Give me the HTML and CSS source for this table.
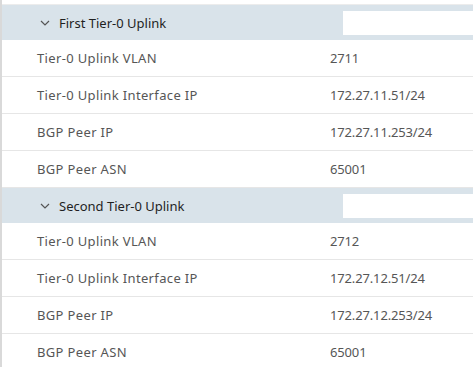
FILE: index.html
```html
<!DOCTYPE html>
<html>
<head>
<meta charset="utf-8">
<link rel="stylesheet" href="styles.css">
</head>
<body>
<div class="panel">
  <div class="group">
    <div class="group-header">
      <svg class="chev" width="10" height="6" viewBox="0 0 10 6"><path d="M1 1 L5 5 L9 1" fill="none" stroke="#555" stroke-width="1.2"/></svg>
      <span class="group-title">First Tier-0 Uplink</span>
      <div class="field"></div>
    </div>
    <div class="row"><span class="label">Tier-0 Uplink VLAN</span><span class="value">2711</span></div>
    <div class="row"><span class="label">Tier-0 Uplink Interface IP</span><span class="value">172.27.11.51/24</span></div>
    <div class="row"><span class="label">BGP Peer IP</span><span class="value">172.27.11.253/24</span></div>
    <div class="row"><span class="label">BGP Peer ASN</span><span class="value">65001</span></div>
  </div>
  <div class="group">
    <div class="group-header">
      <svg class="chev" width="10" height="6" viewBox="0 0 10 6"><path d="M1 1 L5 5 L9 1" fill="none" stroke="#555" stroke-width="1.2"/></svg>
      <span class="group-title">Second Tier-0 Uplink</span>
      <div class="field"></div>
    </div>
    <div class="row"><span class="label">Tier-0 Uplink VLAN</span><span class="value">2712</span></div>
    <div class="row"><span class="label">Tier-0 Uplink Interface IP</span><span class="value">172.27.12.51/24</span></div>
    <div class="row"><span class="label">BGP Peer IP</span><span class="value">172.27.12.253/24</span></div>
    <div class="row"><span class="label">BGP Peer ASN</span><span class="value">65001</span></div>
  </div>
</div>
</body>
</html>
```

FILE: styles.css
```css
html, body {
  margin: 0;
  padding: 0;
  background: #fff;
  overflow: hidden;
}
body {
  font-family: "Noto Sans", "Open Sans", sans-serif;
  font-size: 13px;
}
.panel {
  border-left: 2px solid #d9d9d9;
  padding-top: 4px;
  min-height: 367px;
}
.group:first-child {
  border-top: 1px solid #ececec;
}
.group-header {
  height: 35px;
  background: #d9e3ea;
  display: flex;
  align-items: center;
  padding-left: 38px;
}
.chev {
  flex: none;
  margin-right: 9px;
}
.group-title {
  color: #1f1f1f;
  font-size: 13px;
}
.field {
  margin-left: auto;
  width: 140px;
  height: 24px;
  background: #fff;
  margin-right: -10px;
}
.row {
  height: 36px;
  display: grid;
  grid-template-columns: 293px 1fr;
  align-items: center;
  padding-left: 35px;
  border-bottom: 1px solid #e6e6e6;
  color: #565656;
}
.label {
  letter-spacing: 0.35px;
}
.value {
  letter-spacing: -0.15px;
}
```
